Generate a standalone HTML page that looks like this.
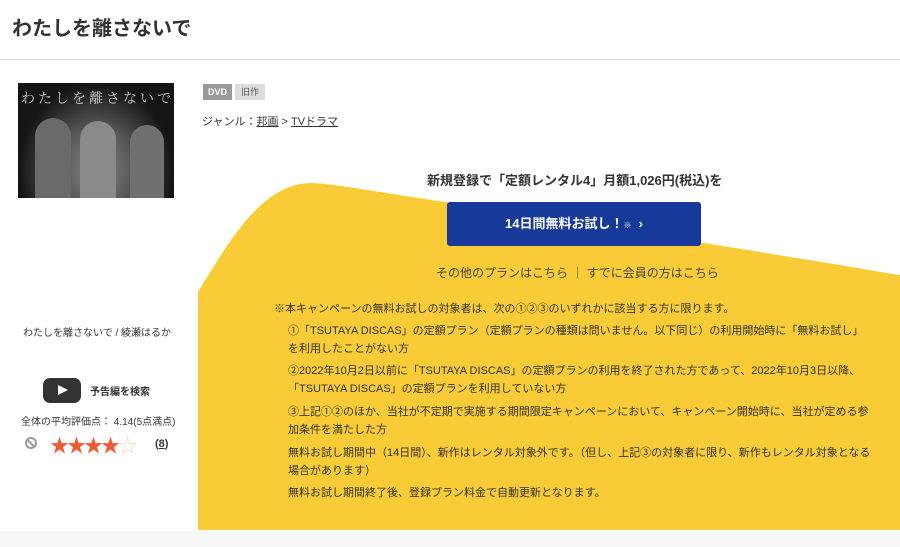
<!DOCTYPE html>
<html><head><meta charset="utf-8"><style>
*{margin:0;padding:0;box-sizing:border-box}
body{width:900px;height:547px;overflow:hidden;background:#fff;font-family:"Liberation Sans","Noto Sans CJK JP",sans-serif;color:#333;position:relative}
.a{position:absolute;white-space:nowrap}
h1{position:absolute;left:12px;top:12px;font-size:20px;font-weight:bold;color:#333}
.hr{position:absolute;left:0;top:59px;width:900px;height:1px;background:#ddd}
.t{font-size:11px;color:#333}
.y{font-size:11px;color:#333;line-height:18px}
</style></head><body>
<h1>わたしを離さないで</h1>
<div class="hr"></div>
<div class="a" style="left:18px;top:83px;width:156px;height:115px;background:radial-gradient(ellipse at 50% 75%,#888 0,#555 35%,#151515 70%);overflow:hidden">
<div style="position:absolute;left:3px;top:5px;font-size:14px;color:#ccc;letter-spacing:3px;font-family:'Noto Serif CJK SC',serif">わたしを離さないで</div>
<div style="position:absolute;left:17px;top:35px;width:36px;height:90px;border-radius:18px 18px 0 0;background:#6a6a6a"></div>
<div style="position:absolute;left:62px;top:38px;width:36px;height:90px;border-radius:18px 18px 0 0;background:#8a8a8a"></div>
<div style="position:absolute;left:112px;top:42px;width:34px;height:90px;border-radius:18px 18px 0 0;background:#707070"></div>
</div>
<div class="a" style="left:203px;top:84px;width:29px;height:16px;background:#999;color:#fff;font-size:9px;font-weight:bold;text-align:center;line-height:16px">DVD</div>
<div class="a" style="left:235px;top:84px;width:30px;height:16px;background:#ddd;color:#555;font-size:9px;text-align:center;line-height:16px">旧作</div>
<div class="a t" style="left:202px;top:113px">ジャンル：<u>邦画</u> &gt; <u>TVドラマ</u></div>
<svg class="a" style="left:0;top:0" width="900" height="547">
<path d="M198,530 L198,292 C230,240 262,183 312,183 C345,185 360,190 500,210 L840,265 C870,270 885,273 900,275 L900,530 Z" fill="#f9cc37"/>
<rect x="0" y="531" width="900" height="16" fill="#f8f8f8"/>
</svg>
<div class="a" style="left:427px;top:170px;font-size:13px;font-weight:bold;color:#333">新規登録で「定額レンタル4」月額1,026円(税込)を</div>
<div class="a" style="left:447px;top:202px;width:254px;height:44px;background:#173a9a;border-radius:3px;color:#fff;font-size:13px;font-weight:bold;text-align:center;line-height:44px">14日間無料お試し！<span style="font-size:8px">※</span> &nbsp;›</div>
<div class="a" style="left:436px;top:264px;font-size:12px;color:#444">その他のプランはこちら ｜ すでに会員の方はこちら</div>
<div class="a y" style="left:274px;top:300px">※本キャンペーンの無料お試しの対象者は、次の①②③のいずれかに該当する方に限ります。</div>
<div class="a y" style="left:288px;top:322px;white-space:normal;width:586px">①「TSUTAYA DISCAS」の定額プラン（定額プランの種類は問いません。以下同じ）の利用開始時に「無料お試し」を利用したことがない方</div>
<div class="a y" style="left:288px;top:362px;white-space:normal;width:586px">②2022年10月2日以前に「TSUTAYA DISCAS」の定額プランの利用を終了された方であって、2022年10月3日以降、「TSUTAYA DISCAS」の定額プランを利用していない方</div>
<div class="a y" style="left:288px;top:403px;white-space:normal;width:586px">③上記①②のほか、当社が不定期で実施する期間限定キャンペーンにおいて、キャンペーン開始時に、当社が定める参加条件を満たした方</div>
<div class="a y" style="left:288px;top:444px;white-space:normal;width:586px">無料お試し期間中（14日間）、新作はレンタル対象外です。（但し、上記③の対象者に限り、新作もレンタル対象となる場合があります）</div>
<div class="a y" style="left:288px;top:484px">無料お試し期間終了後、登録プラン料金で自動更新となります。</div>
<div class="a t" style="left:23px;top:324px;font-size:10px">わたしを離さないで / 綾瀬はるか</div>
<div class="a" style="left:43px;top:378px;width:38px;height:25px;background:#333;border-radius:7px"><div style="position:absolute;left:15px;top:7px;border-left:10px solid #fff;border-top:5.5px solid transparent;border-bottom:5.5px solid transparent"></div></div>
<div class="a" style="left:90px;top:383px;font-size:10px;font-weight:bold">予告編を検索</div>
<div class="a" style="left:21px;top:413px;font-size:10px">全体の平均評価点： 4.14(5点満点)</div>
<div class="a" style="left:25px;top:437px;width:12px;height:12px;border:2px solid #999;border-radius:50%"><div style="position:absolute;left:3px;top:-1px;width:2px;height:11px;background:#999;transform:rotate(-45deg)"></div></div>
<div class="a" style="left:50px;top:431px;font-size:19px;color:#ee5a32;letter-spacing:-2px">★★★★<span style="color:#e8dcc0">☆</span></div>
<div class="a" style="left:155px;top:438px;font-size:11px;font-weight:bold">(<u>8</u>)</div>
</body></html>
